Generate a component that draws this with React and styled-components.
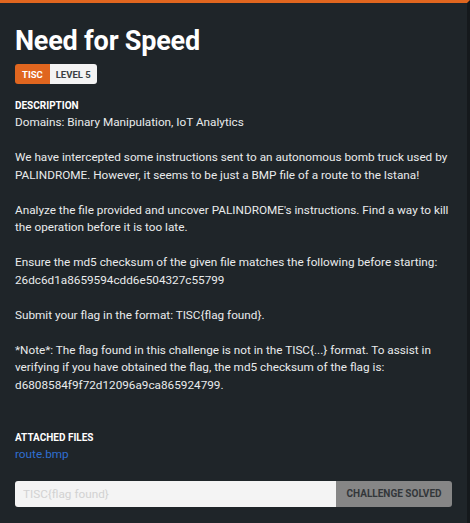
import styled, { createGlobalStyle } from "styled-components";

const GlobalStyle = createGlobalStyle`
  html, body {
    margin: 0;
    padding: 0;
    background: #1f2529;
  }
`;

const Page = styled.div`
  width: 470px;
  height: 523px;
  box-sizing: border-box;
  background: #1f2529;
  border-right: 3px solid #15191c;
  border-top: 3px solid #e0661f;
  padding: 20px 15px 0 15px;
  color: #eef0f1;
  font-family: Roboto, "Liberation Sans", sans-serif;
  overflow: hidden;
`;

const Title = styled.h1`
  margin: 0;
  font-weight: bold;
  font-size: 27px;
  line-height: 36px;
  letter-spacing: -0.2px;
  color: #ffffff;
`;

const Badges = styled.div`
  display: flex;
  margin-top: 5px;
  height: 20px;
  width: fit-content;
  border-radius: 3px;
  overflow: hidden;
`;

const Badge = styled.span`
  display: flex;
  align-items: center;
  padding: 0 ${({ $primary }) => ($primary ? "7px" : "6px")};
  background: ${({ $primary }) => ($primary ? "#e0661f" : "#f3f3f3")};
  color: ${({ $primary }) => ($primary ? "#ffffff" : "#3b3f42")};
  font-weight: bold;
  font-size: 9.5px;
`;

const SectionLabel = styled.h3`
  margin: ${({ $top }) => $top} 0 0 0;
  font-weight: bold;
  font-size: 10px;
  line-height: 16px;
  color: #ffffff;
`;

const Body = styled.div`
  font-size: 11.75px;
  line-height: 17.5px;
  color: #e9ebec;
`;

const Para = styled.p`
  margin: 0 0 17.5px 0;
  &:last-child {
    margin-bottom: 0;
  }
`;

const FileLink = styled.a`
  display: block;
  font-size: 11.75px;
  line-height: 17.5px;
  color: #2f6fd1;
  text-decoration: none;
`;

const FlagRow = styled.div`
  display: flex;
  margin-top: 17px;
  height: 26px;
  border-radius: 3px;
  overflow: hidden;
`;

const FlagInput = styled.input`
  flex: 1;
  min-width: 0;
  border: none;
  outline: none;
  background: #f4f4f4;
  padding: 0 8px;
  font-family: Roboto, "Liberation Sans", sans-serif;
  font-size: 11.75px;
  color: #333;
  &::placeholder {
    color: #d2d2d2;
  }
`;

const SolvedButton = styled.button`
  width: 116px;
  border: none;
  background: #868686;
  color: #33373a;
  font-family: Roboto, "Liberation Sans", sans-serif;
  font-weight: bold;
  font-size: 10px;
  white-space: nowrap;
  padding: 0;
`;

export default function App() {
  return (
    <>
      <GlobalStyle />
      <Page>
        <Title>Need for Speed</Title>
        <Badges>
          <Badge $primary>TISC</Badge>
          <Badge>LEVEL 5</Badge>
        </Badges>

        <SectionLabel $top="14px">DESCRIPTION</SectionLabel>
        <Body>
          <Para>Domains: Binary Manipulation, IoT Analytics</Para>
          <Para>
            We have intercepted some instructions sent to an autonomous bomb truck used by
            PALINDROME. However, it seems to be just a BMP file of a route to the Istana!
          </Para>
          <Para>
            Analyze the file provided and uncover PALINDROME's instructions. Find a way to kill
            the operation before it is too late.
          </Para>
          <Para>
            Ensure the md5 checksum of the given file matches the following before starting:
            26dc6d1a8659594cdd6e504327c55799
          </Para>
          <Para>Submit your flag in the format: TISC{"{"}flag found{"}"}.</Para>
          <Para>
            *Note*: The flag found in this challenge is not in the TISC{"{...}"} format. To assist in
            verifying if you have obtained the flag, the md5 checksum of the flag is:
            d6808584f9f72d12096a9ca865924799.
          </Para>
        </Body>

        <SectionLabel $top="36px">ATTACHED FILES</SectionLabel>
        <FileLink href="#">route.bmp</FileLink>

        <FlagRow>
          <FlagInput placeholder="TISC{flag found}" />
          <SolvedButton>CHALLENGE SOLVED</SolvedButton>
        </FlagRow>
      </Page>
    </>
  );
}
